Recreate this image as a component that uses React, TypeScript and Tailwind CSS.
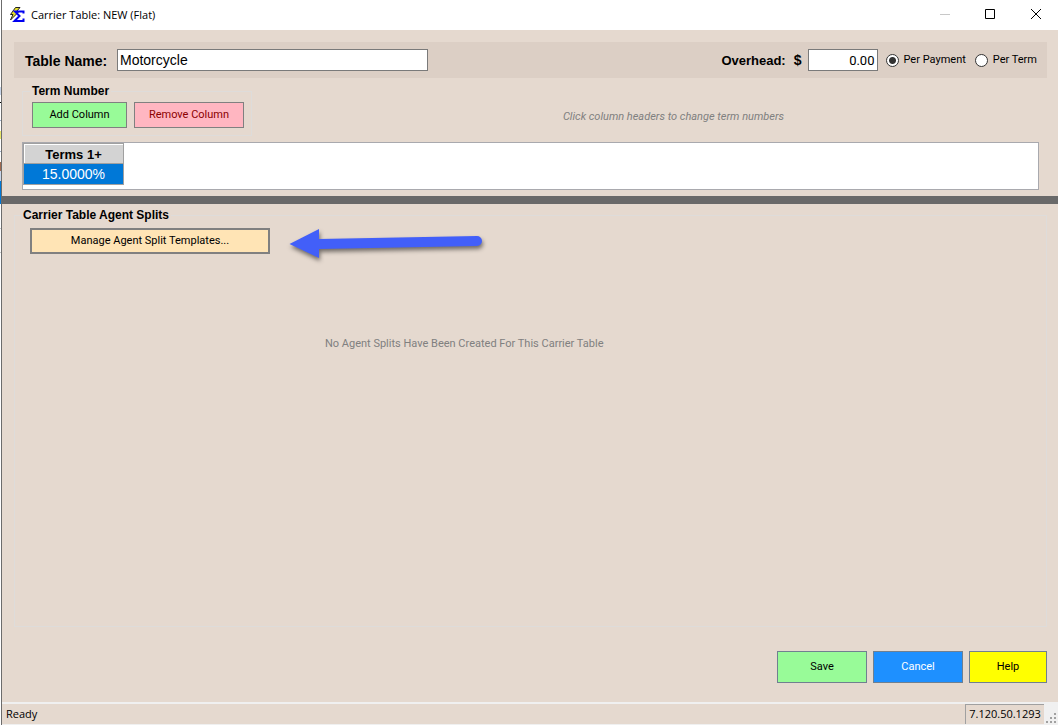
import { useState } from "react";

const button =
  "flex items-center justify-center border pt-px font-['Roboto',sans-serif] text-[11px]";

function AppIcon() {
  return (
    <svg width="17" height="17" viewBox="0 0 17 17" aria-hidden="true">
      <path
        d="M6.500 .5h4.500L7.500 4.500H10L1.500 13l2.500-5.500H1.500z"
        fill="#e8e22a"
        stroke="#222"
        strokeWidth="1"
      />
      <path
        d="M14.500 6.500V4.500H6l4.500 4.500-5 5h9v-2.500"
        fill="none"
        stroke="#0000f0"
        strokeWidth="2"
      />
    </svg>
  );
}

function TitleBar() {
  return (
    <header className="flex h-[30px] items-center bg-white pl-[7px]">
      <AppIcon />
      <h1 className="ml-[5px] grow font-['Open_Sans',sans-serif] text-[11px] leading-4 text-black">
        Carrier Table: NEW (Flat)
      </h1>
      <button
        aria-label="Minimize"
        disabled
        className="flex h-full w-[45px] items-center justify-center"
      >
        <svg width="12" height="12" viewBox="0 0 12 12">
          <path d="M0 5.500h10" stroke="#c8c8c8" />
        </svg>
      </button>
      <button
        aria-label="Maximize"
        className="flex h-full w-[45px] items-center justify-center"
      >
        <svg width="12" height="12" viewBox="0 0 12 12">
          <path d="M.5 .5h9v9h-9z" fill="none" stroke="#000" />
        </svg>
      </button>
      <button
        aria-label="Close"
        className="flex h-full w-[45px] items-center justify-center"
      >
        <svg width="12" height="12" viewBox="0 0 12 12">
          <path d="M1 0l10 10M11 0L1 10" fill="none" stroke="#000" />
        </svg>
      </button>
    </header>
  );
}

const radio =
  "mr-[5px] size-[13px] appearance-none rounded-full border border-[#333] bg-white checked:bg-[radial-gradient(circle,#333_0_3px,#fff_4px)]";

function TableSettings() {
  const [name, setName] = useState("Motorcycle");
  const [overhead, setOverhead] = useState("0.00");
  const [basis, setBasis] = useState("payment");

  return (
    <div className="mr-[11px] ml-3 flex h-9 items-center bg-[#dccfc5] pr-[10px] pl-[11px]">
      <label
        htmlFor="table-name"
        className="w-[92px] pt-px text-[14px] leading-4 font-bold"
      >
        Table Name:
      </label>
      <input
        id="table-name"
        value={name}
        onChange={(e) => setName(e.target.value)}
        className="h-[22px] w-[311px] border border-[#7a7a7a] bg-white px-[2px] text-[14px]"
      />
      <label
        htmlFor="overhead"
        className="ml-auto pt-px text-[13px] leading-4 font-bold"
      >
        Overhead:
      </label>
      <span className="ml-2 text-[14px] font-bold">$</span>
      <input
        id="overhead"
        value={overhead}
        onChange={(e) => setOverhead(e.target.value)}
        className="ml-[6px] h-[22px] w-[70px] border border-[#7a7a7a] bg-white px-[2px] text-right font-['Roboto',sans-serif] text-[13px]"
      />
      <label className="ml-2 flex items-center font-['Roboto',sans-serif] text-[11px]">
        <input
          type="radio"
          name="basis"
          className={radio}
          checked={basis === "payment"}
          onChange={() => setBasis("payment")}
        />
        <span className="pt-px">Per Payment</span>
      </label>
      <label className="ml-[9px] flex items-center font-['Roboto',sans-serif] text-[11px]">
        <input
          type="radio"
          name="basis"
          className={radio}
          checked={basis === "term"}
          onChange={() => setBasis("term")}
        />
        <span className="pt-px">Per Term</span>
      </label>
    </div>
  );
}

function TermGrid() {
  return (
    <div className="mr-[19px] ml-5 h-12 border border-[#a9a9ae] bg-white">
      <table className="w-[101px] border-collapse text-center">
        <thead>
          <tr>
            <th className="h-5 border border-[#a0a0a0] bg-[#d3d3d3] p-0 pt-[2px] text-[13px] leading-4 font-bold shadow-[inset_1px_1px_#fff]">
              Terms 1+
            </th>
          </tr>
        </thead>
        <tbody>
          <tr>
            <td className="h-[21px] border border-[#a0a0a0] bg-[#0078d7] p-0 text-[14px] leading-4 text-white">
              15.0000%
            </td>
          </tr>
        </tbody>
      </table>
    </div>
  );
}

function Arrow() {
  return (
    <svg
      width="202"
      height="40"
      viewBox="0 0 202 40"
      className="ml-[18px] drop-shadow-[1px_3px_2px_rgba(0,0,0,0.5)]"
      aria-hidden="true"
    >
      <path
        d="M1.500 23L31 8v10L189 15a5 5 0 0 1 0 10L31 28v9z"
        fill="#425ff9"
      />
    </svg>
  );
}

// Sliver of the window behind this one
function BackgroundEdge() {
  return (
    <div className="flex w-[2px] shrink-0 flex-col border-r border-[#6c6c6c] bg-white">
      <div className="mt-[87px] h-2 bg-[#c9d6ea]" />
      <div className="mt-[7px] h-px bg-black" />
      <div className="mt-[17px] h-px bg-[#9fb0cc]" />
      <div className="mt-[10px] h-[8px] bg-[#e8e66a]" />
      <div className="mt-3 h-px bg-[#9fb0cc]" />
      <div className="mt-[10px] h-[9px] bg-[#a0694f]" />
      <div className="h-[10px] bg-[#c9d6ea]" />
      <div className="h-[23px] bg-[#0078d7]" />
      <div className="mt-6 h-px bg-[#c8c8c8]" />
      <div className="mt-[23px] h-px bg-[#c8c8c8]" />
    </div>
  );
}

export default function App() {
  return (
    <div className="flex min-h-screen bg-[#e5d9cf] font-['Liberation_Sans',sans-serif] text-black">
      <BackgroundEdge />
      <div className="flex grow flex-col">
        <TitleBar />
        <main className="flex grow flex-col pt-3">
          <TableSettings />

          <div className="mt-[5px] flex items-end pl-5">
            <fieldset className="h-[53px] w-[230px] border border-[#dedcda] pl-[9px]">
              <legend className="-ml-[2px] px-[2px] text-[12px] leading-4 font-bold">
                Term Number
              </legend>
              <div className="mt-[3px] flex gap-[7px]">
                <button
                  className={`${button} h-[26px] w-[95px] border-[#808080] bg-[#98fb98]`}
                >
                  Add Column
                </button>
                <button
                  className={`${button} h-[26px] w-[110px] border-[#808080] bg-[#ffb6c1] text-[#8b0000]`}
                >
                  Remove Column
                </button>
              </div>
            </fieldset>
            <p className="mr-[19px] mb-[11px] ml-[56px] grow text-center font-['Roboto',sans-serif] text-[11px] leading-4 text-[#808080] italic">
              Click column headers to change term numbers
            </p>
          </div>

          <div className="mt-[6px]">
            <TermGrid />
          </div>
          <div className="mt-[6px] h-2 bg-[#696969]" />

          <fieldset className="mt-[3px] mr-[11px] ml-3 flex grow flex-col border border-[#dedcda] pr-[10px]">
            <legend className="ml-[6px] px-[2px] text-[12px] leading-4 font-bold">
              Carrier Table Agent Splits
            </legend>
            <div className="flex h-9 items-center pl-[15px]">
              <button
                className={`${button} h-[26px] w-[240px] border-2 border-[#808080] bg-[#ffe4b5]`}
              >
                Manage Agent Split Templates...
              </button>
              <Arrow />
            </div>
            <p className="mt-[77px] w-[88%] text-center font-['Roboto',sans-serif] text-[11px] leading-4 text-[#808080]">
              No Agent Splits Have Been Created For This Carrier Table
            </p>
          </fieldset>

          <div className="mt-6 mr-[11px] mb-[19px] flex justify-end gap-[6px]">
            <button
              className={`${button} h-8 w-[90px] border-[#708090] bg-[#98fb98]`}
            >
              Save
            </button>
            <button
              className={`${button} h-8 w-[90px] border-[#708090] bg-[#1e90ff] text-white`}
            >
              Cancel
            </button>
            <button
              className={`${button} h-8 w-[78px] border-[#708090] bg-[#ffff00]`}
            >
              Help
            </button>
          </div>
        </main>

        <footer className="flex h-[23px] items-stretch border-t-2 border-b border-[#f0f0f0] font-['Open_Sans',sans-serif] text-[11px] leading-5">
          <span className="grow pl-1">Ready</span>
          <span className="w-[79px] border-t border-l border-[#a0a0a0] text-center leading-[18px]">
            7.120.50.1293
          </span>
          <span className="flex w-[14px] items-end justify-end bg-[#f0f0f0]">
            <svg width="12" height="12" viewBox="0 0 12 12" aria-hidden="true">
              <path
                d="M8 1h2v2H8zM4 5h2v2H4zM8 5h2v2H8zM0 9h2v2H0zM4 9h2v2H4zM8 9h2v2H8z"
                fill="#a0a0a0"
              />
            </svg>
          </span>
        </footer>
      </div>
    </div>
  );
}
